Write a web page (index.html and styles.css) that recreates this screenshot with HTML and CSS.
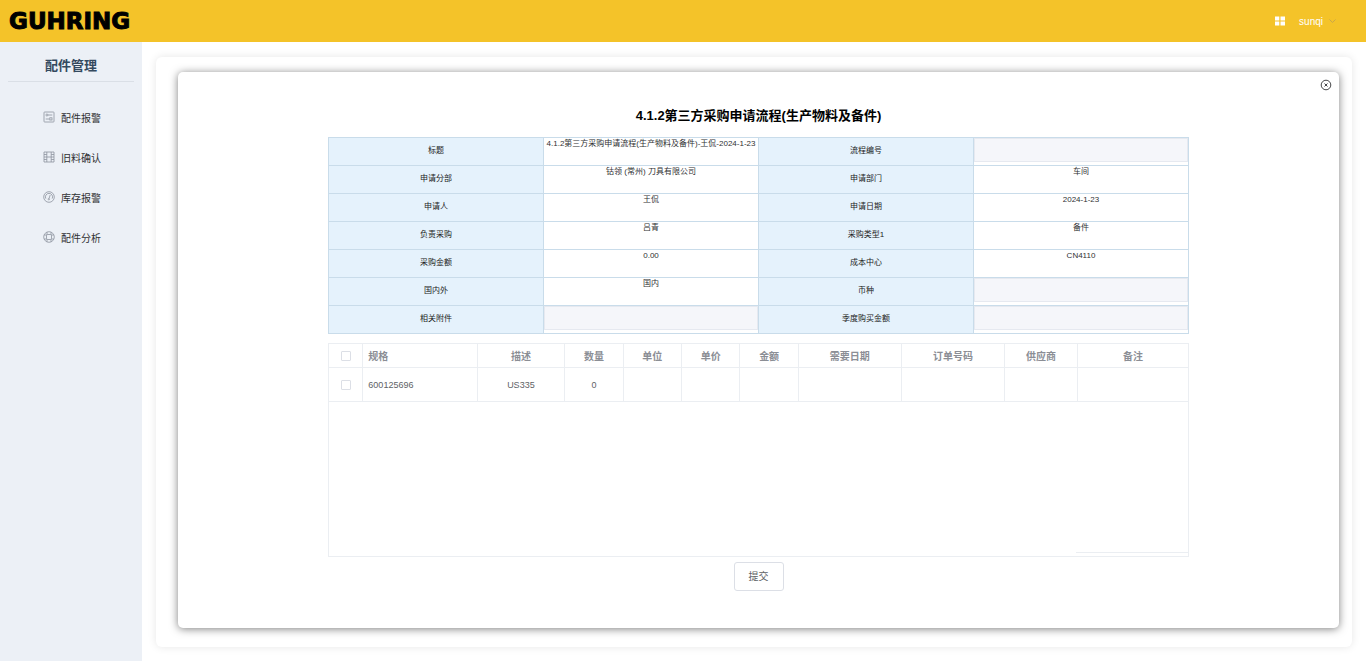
FILE: index.html
```html
<!DOCTYPE html>
<html lang="zh-CN">
<head>
<meta charset="utf-8">
<title>配件管理</title>
<link rel="stylesheet" href="styles.css">
</head>
<body>
<header class="topbar">
  <div class="logo">GUHRING</div>
  <div class="user-area">
    <button class="icon-button" type="button" aria-label="应用">
      <svg class="grid-icon" viewBox="0 0 10 10"><path d="M0 .5h4.3v4H0zM5.5.5H10v4H5.5zM0 5.6h4.3v4H0zM5.5 5.6H10v4H5.5z"/></svg>
    </button>
    <button class="user-button" type="button">sunqi
      <svg class="chevron" viewBox="0 0 8 8"><path d="M1 2.5 4 5.5 7 2.5"/></svg>
    </button>
  </div>
</header>
<div class="shell">
  <aside class="sidebar">
    <h2 class="sidebar-title">配件管理</h2>
    <nav class="menu">
      <a class="menu-item" href="#alarm">
        <svg class="menu-icon" viewBox="0 0 12 12"><rect x="1" y="1" width="10" height="10" rx=".6"/><circle cx="3.9" cy="4" r="1"/><path d="M5 4h4.3M2.7 8h3.6"/><rect x="6.8" y="6.8" width="2.2" height="2.2"/></svg>
        配件报警</a>
      <a class="menu-item" href="#confirm">
        <svg class="menu-icon" viewBox="0 0 12 12"><path d="M1 1h10v10H1zM3.8 1v10M8.2 1v10M3.8 6h4.4M1 3.5h2.8M1 6h2.8M1 8.5h2.8M8.2 3.5H11M8.2 6H11M8.2 8.5H11"/></svg>
        旧料确认</a>
      <a class="menu-item" href="#stock">
        <svg class="menu-icon" viewBox="0 0 12 12"><circle cx="6" cy="6" r="5.3"/><path d="M2.8 7.6a3.6 3.6 0 1 1 6.4 0M6.1 7.4 7.2 4"/><circle cx="5.8" cy="8.2" r=".7"/></svg>
        库存报警</a>
      <a class="menu-item" href="#analysis">
        <svg class="menu-icon" viewBox="0 0 12 12"><circle cx="6" cy="6" r="5.3"/><rect x="3.5" y="3.5" width="5" height="5" rx="1.2"/><path d="M4 1.2v2.6M8 1.2v2.6M4 8.2v2.6M8 8.2v2.6M1.2 4h2.6M1.2 8h2.6M8.2 4h2.6M8.2 8h2.6"/></svg>
        配件分析</a>
    </nav>
  </aside>
  <main class="content">
    <div class="card">
      <section class="dialog">
        <button class="close" type="button" aria-label="关闭">
          <svg class="close-icon" viewBox="0 0 12 12"><circle cx="6" cy="6" r="4.8"/><path d="m4.5 4.5 3 3M7.5 4.5l-3 3"/></svg>
        </button>
        <div class="sheet">
          <h1 class="title">4.1.2第三方采购申请流程(生产物料及备件)</h1>
          <table class="form-table">
            <tr><th>标题</th><td>4.1.2第三方采购申请流程(生产物料及备件)-王侃-2024-1-23</td><th>流程编号</th><td><input class="blank" aria-label="流程编号" disabled></td></tr>
            <tr><th>申请分部</th><td>钴领 (常州) 刀具有限公司</td><th>申请部门</th><td>车间</td></tr>
            <tr><th>申请人</th><td>王侃</td><th>申请日期</th><td>2024-1-23</td></tr>
            <tr><th>负责采购</th><td>吕青</td><th>采购类型1</th><td>备件</td></tr>
            <tr><th>采购金额</th><td>0.00</td><th>成本中心</th><td>CN4110</td></tr>
            <tr><th>国内外</th><td>国内</td><th>币种</th><td><input class="blank" aria-label="币种" disabled></td></tr>
            <tr><th>相关附件</th><td><input class="blank" aria-label="相关附件" disabled></td><th>季度购买金额</th><td><input class="blank" aria-label="季度购买金额" disabled></td></tr>
          </table>
          <div class="grid-wrap">
            <table class="grid">
              <thead>
                <tr><th class="c-check"><input class="tick" type="checkbox" aria-label="全选"></th><th class="c-spec">规格</th><th class="c-desc">描述</th><th class="c-short">数量</th><th class="c-short">单位</th><th class="c-short">单价</th><th class="c-short">金额</th><th class="c-long">需要日期</th><th class="c-long">订单号码</th><th class="c-vendor">供应商</th><th>备注</th></tr>
              </thead>
              <tbody>
                <tr><td><input class="tick" type="checkbox" aria-label="选择 600125696"></td><td class="c-spec">600125696</td><td>US335</td><td>0</td><td></td><td></td><td></td><td></td><td></td><td></td><td></td></tr>
              </tbody>
            </table>
            <div class="grid-foot"></div>
          </div>
          <button class="submit" type="button">提交</button>
        </div>
      </section>
    </div>
  </main>
</div>
</body>
</html>
```
FILE: styles.css
```css
* { box-sizing: border-box; }
body {
  margin: 0;
  min-height: 100vh;
  display: flex;
  flex-direction: column;
  font-family: "Liberation Sans", "Noto Sans CJK SC", sans-serif;
  font-size: 10px;
  color: #303133;
  background: #fff;
}
button { font: inherit; padding: 0; border: 0; background: none; cursor: pointer; }
svg { display: block; fill: none; }

.topbar {
  height: 42px;
  display: flex;
  align-items: center;
  justify-content: space-between;
  padding: 0 29px 0 9px;
  background: #f4c329;
}
.logo {
  font-family: "DejaVu Sans", sans-serif;
  font-size: 23px;
  line-height: 40px;
  font-weight: 700;
  color: #000;
  -webkit-text-stroke: 1px #000;
}
.user-area { display: flex; align-items: center; gap: 14px; }
.grid-icon { width: 10px; height: 10px; fill: #fff; }
.user-button { display: flex; align-items: center; gap: 5px; color: #fff; }
.chevron { width: 9px; height: 8px; stroke: #c9a64a; }

.shell { flex: 1; display: flex; }
.sidebar { width: 142px; padding: 0 8px; background: #ecf0f6; }
.sidebar-title {
  margin: 0;
  padding: 12px 0 3px;
  font-size: 13px;
  line-height: 24px;
  text-align: center;
  color: #34495e;
  border-bottom: 1px solid #dadfe6;
}
.menu { display: flex; flex-direction: column; padding-top: 15px; }
.menu-item {
  display: flex;
  align-items: center;
  gap: 6px;
  height: 40px;
  padding-left: 35px;
  color: #303133;
  text-decoration: none;
}
.menu-icon { width: 12px; height: 12px; stroke: #8d939e; stroke-width: .8; }

.content { flex: 1; display: flex; padding: 15px 14px 14px; }
.card {
  flex: 1;
  display: flex;
  padding: 15px 13px 19px 22px;
  border-radius: 6px;
  box-shadow: 0 0 8px rgba(0, 0, 0, .1);
}
.dialog {
  position: relative;
  flex: 1;
  padding: 32px 150px 36px;
  border-radius: 5px;
  box-shadow: 0 1px 8px rgba(0, 0, 0, .5);
}
.close { position: absolute; top: 7px; right: 7px; }
.close-icon { width: 12px; height: 12px; stroke: #303133; stroke-width: .9; }
.sheet { display: flex; flex-direction: column; }
.title { margin: 0 0 10px; font-size: 13px; line-height: 23px; text-align: center; color: #000; }

.form-table { width: 100%; table-layout: fixed; border-collapse: collapse; font-size: 8px; line-height: 12px; }
.form-table th, .form-table td {
  height: 28px;
  padding: 0;
  border: 1px solid #c9dcea;
  text-align: center;
  white-space: nowrap;
}
.form-table th { padding-bottom: 2px; font-weight: 400; color: #222; background: #e5f2fc; }
.form-table td { vertical-align: top; }
.blank { display: block; width: 100%; height: 24px; border: 1px solid #e6e9f0; background: #f5f6fa; }

.grid-wrap {
  height: 214px;
  margin-top: 9px;
  display: flex;
  flex-direction: column;
  justify-content: space-between;
  border: 1px solid #ebeef2;
}
.grid { width: 100%; table-layout: fixed; border-collapse: separate; border-spacing: 0; }
.grid th, .grid td {
  padding: 0;
  text-align: center;
  border-right: 1px solid #ebeef2;
  border-bottom: 1px solid #ebeef2;
}
.grid th { height: 24px; color: #8b8e95; font-weight: 700; }
.grid td { height: 34px; color: #606266; font-size: 9px; }
.grid tr > :last-child { border-right: 0; }
.c-check { width: 4%; }
.c-spec { width: 13.3%; }
.grid .c-spec { padding-left: 5px; text-align: left; }
.c-desc { width: 10.2%; }
.c-short { width: 6.8%; }
.c-long { width: 12%; }
.c-vendor { width: 8.5%; }
.tick {
  appearance: none;
  display: block;
  width: 10px;
  height: 10px;
  margin: 0 auto;
  border: 1px solid #dcdfe6;
  border-radius: 1px;
  background: #fff;
}
.grid-foot { align-self: flex-end; width: 13%; height: 4px; border-top: 1px solid #ebeef2; }
.submit {
  align-self: center;
  width: 50px;
  height: 29px;
  margin-top: 5px;
  padding-bottom: 2px;
  color: #606266;
  border: 1px solid #dcdfe6;
  border-radius: 3px;
  background: #fff;
}
```
